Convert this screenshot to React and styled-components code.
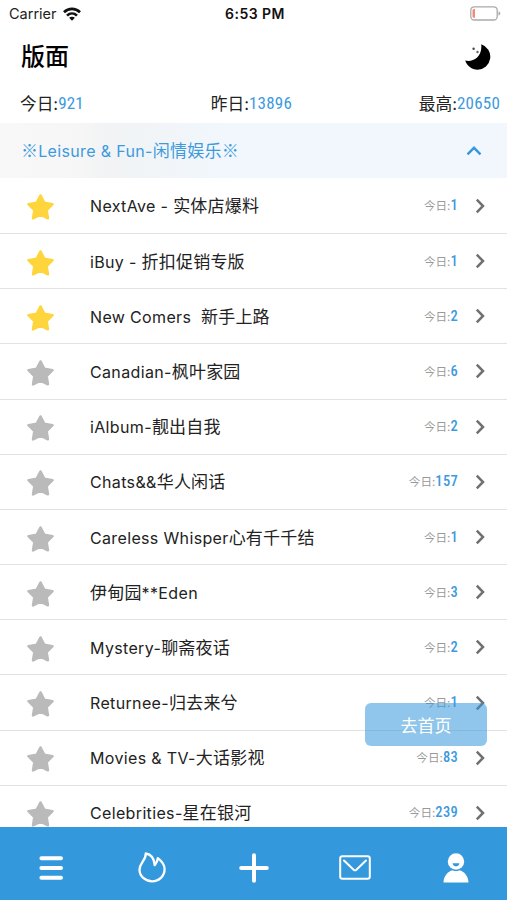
import React, { useState } from 'react';
import styled, { createGlobalStyle } from 'styled-components';

const GlobalStyle = createGlobalStyle`
  body {
    margin: 0;
    background: #fff;
    font-family: Inter, 'Noto Sans CJK SC', sans-serif;
    color: #222;
  }
  * {
    box-sizing: border-box;
  }
`;

const Screen = styled.div`
  position: relative;
  display: flex;
  flex-direction: column;
  width: 507px;
  height: 900px;
  overflow: hidden;
`;

const StatusBar = styled.div`
  display: grid;
  grid-template-columns: 1fr auto 1fr;
  align-items: center;
  height: 27px;
  padding: 0 6px 0 9px;
  font-size: 14.5px;
  svg {
    display: block;
  }
`;

const Carrier = styled.div`
  display: flex;
  align-items: center;
  gap: 6px;
  letter-spacing: 0;
`;

const Clock = styled.div`
  color: #111;
  font-size: 14px;
  font-weight: 600;
  letter-spacing: 0.45px;
`;

const Battery = styled.div`
  justify-self: end;
`;

const Header = styled.header`
  display: flex;
  align-items: center;
  justify-content: space-between;
  height: 59px;
  padding: 0 16px 0 21px;
`;

const Title = styled.h1`
  margin: 0;
  color: #000;
  font-size: 24px;
  font-weight: 500;
  line-height: 32px;
`;

const Stats = styled.div`
  display: flex;
  justify-content: space-between;
  height: 37px;
  padding: 6px 7px 0 20px;
`;

const Stat = styled.div`
  display: flex;
  font-size: 16.7px;
  line-height: 25px;
`;

const Count = styled.span`
  color: #3d9add;
  font-family: Roboto, sans-serif;
  font-stretch: 75%;
  font-size: ${(props) => (props.$small ? 14.5 : 17)}px;
  font-weight: ${(props) => (props.$small ? 500 : 400)};
  letter-spacing: ${(props) => (props.$small ? 0.3 : 0.2)}px;
  line-height: ${(props) => (props.$small ? 18 : 22)}px;
`;

const SectionHeader = styled.div`
  display: flex;
  flex: none;
  align-items: center;
  justify-content: space-between;
  height: 55px;
  padding: 0 25px 0 21px;
  background: linear-gradient(90deg, #f8f8f8 0, #f6f6f6 80px, #f1f3f4 105px, #f1f7fd 230px);
  color: #3d9add;
`;

const BoardList = styled.div`
  flex: 1;
  min-height: 0;
  padding-top: 0.8px;
  overflow: hidden;
`;

const BoardRow = styled.div`
  display: flex;
  align-items: center;
  height: 55.2px;
  padding: 0 22px 0 26px;
  border-bottom: 1.5px solid #e2e2e2;
`;

const StarIcon = styled.svg`
  flex: none;
  margin-top: 3px;
  color: ${(props) => (props.$active ? '#fed53c' : '#bababa')};
`;

const Label = styled.span`
  font-size: 16px;
  letter-spacing: 0.35px;
  line-height: 24px;
  white-space: pre;
`;

const Hanzi = styled.span`
  font-family: 'Noto Sans CJK SC', sans-serif;
  font-size: 17px;
  letter-spacing: 0.2px;
`;

const BoardName = styled.div`
  flex: 1;
  padding-left: 35px;
`;

const Today = styled.div`
  display: flex;
  align-items: center;
  margin: 1px 17px 0 0;
  color: #999;
  font-size: 11.6px;
  line-height: 18px;
`;

const HomeButton = styled.button`
  position: absolute;
  right: 20px;
  bottom: 154px;
  width: 122px;
  height: 43px;
  border: 0;
  border-radius: 6px;
  background: rgba(52, 152, 219, 0.55);
  color: #fff;
  font-family: inherit;
  font-size: 17px;
`;

const TabBar = styled.nav`
  display: flex;
  flex: none;
  height: 73px;
  background: #3498dd;
`;

const Tab = styled.div`
  display: flex;
  flex: 1;
  align-items: center;
  justify-content: center;
  padding-top: 8px;
  color: #fff;
`;

const boards = [
  { name: 'NextAve - 实体店爆料', today: 1, starred: true },
  { name: 'iBuy - 折扣促销专版', today: 1, starred: true },
  { name: 'New Comers  新手上路', today: 2, starred: true },
  { name: 'Canadian-枫叶家园', today: 6 },
  { name: 'iAlbum-靓出自我', today: 2 },
  { name: 'Chats&&华人闲话', today: 157 },
  { name: 'Careless Whisper心有千千结', today: 1 },
  { name: '伊甸园**Eden', today: 3 },
  { name: 'Mystery-聊斋夜话', today: 2 },
  { name: 'Returnee-归去来兮', today: 1 },
  { name: 'Movies & TV-大话影视', today: 83 },
  { name: 'Celebrities-星在银河', today: 239 },
];

const stats = [
  { label: '今日:', value: 921 },
  { label: '昨日:', value: 13896 },
  { label: '最高:', value: 20650 },
];

// Chinese runs are set a little larger than the latin ones
const MixedText = ({ text }) => (
  <Label>
    {text
      .split(/([※\u4e00-\u9fff]+)/)
      .map((part, index) => (index % 2 ? <Hanzi key={index}>{part}</Hanzi> : part))}
  </Label>
);

const WifiIcon = () => (
  <svg width="18" height="14" viewBox="0 0 18 14" fill="none" stroke="#111" strokeWidth="2.7">
    <path d="M1 5.2C5.6.7 12.4.7 17 5.2" />
    <path d="M4 8.6c2.9-2.8 7.1-2.8 10 0" />
    <path d="M9 13.7 6.1 10.8c1.7-1.5 4.1-1.5 5.8 0Z" fill="#111" stroke="none" />
  </svg>
);

const BatteryIcon = () => (
  <svg width="31" height="15" viewBox="0 0 31 15">
    <rect x=".8" y=".8" width="26.4" height="13.2" rx="3.5" fill="none" stroke="#aaa" strokeWidth="1.3" />
    <path d="M5 3v8.800H4A1.5 1.5 0 0 1 2.500 10.300V4.500A1.5 1.5 0 0 1 4 3Z" fill="#f5887c" />
    <path d="M28.500 5.200c2.400.8 2.400 3.600 0 4.400Z" fill="#aaa" />
  </svg>
);

const MoonIcon = () => (
  <svg width="26" height="26" viewBox="0 0 26 26">
    <path d="M16.200.3A13 13 0 0 1 12.600 25.700C6.800 25.700 2 22 .2 16.600 7 18.800 17.800 13.500 16.200.3Z" />
    <circle cx="8.600" cy="4.700" r="1.200" fill="#444" />
    <circle cx="12.500" cy="8" r="1.200" fill="#666" />
  </svg>
);

const Star = ({ active }) => (
  <StarIcon $active={active} width="29" height="28" viewBox="0 0 29 28">
    <path
      d="M14.500 2.500 18.300 9.900 26.500 11.200 20.600 17.100 21.900 25.300 14.500 21.600 7.100 25.300 8.400 17.100 2.500 11.200 10.700 9.900Z"
      fill="currentColor"
      stroke="currentColor"
      strokeWidth="2.600"
      strokeLinejoin="round"
    />
  </StarIcon>
);

const Chevron = () => (
  <svg width="10" height="16" viewBox="0 0 10 16" fill="none" stroke="#707070" strokeWidth="2.500">
    <path d="m1.800 1.700 6.200 6.300-6.200 6.300" />
  </svg>
);

const MenuIcon = () => (
  <svg width="24" height="26" viewBox="0 0 24 26" stroke="#fff" strokeWidth="4" strokeLinecap="round">
    <path d="M2.400 3.300h19.600M2.400 13h19.600M2.400 22.700h19.600" />
  </svg>
);

const FlameIcon = () => (
  <svg width="28" height="31" viewBox="0 0 28 31" fill="none" stroke="#fff" strokeWidth="2.300" strokeLinejoin="round">
    <path d="M7.800 1.500C12.500 2.100 16 5.500 16.700 13.200 18.500 11.200 19.600 9 19.800 6.200 24.200 9.500 26.600 13 26.600 17.300 26.600 24.200 20.900 29.300 14.100 29.300S1.500 24.100 1.500 17.700C1.500 10.700 7.800 9 7.800 1.500Z" />
  </svg>
);

const PlusIcon = () => (
  <svg width="30" height="30" viewBox="0 0 30 30" stroke="#fff" strokeWidth="4" strokeLinecap="round">
    <path d="M15 2.200v25.600M2.200 15h25.600" />
  </svg>
);

const MailIcon = () => (
  <svg width="32" height="25" viewBox="0 0 32 25" fill="none" stroke="#fff" strokeWidth="2">
    <rect x="1.200" y="1.200" width="29.600" height="22.600" rx="2.200" />
    <path d="m5 5.500 9.600 9.200q1.400 1.200 2.800 0L27 5.500" strokeLinecap="round" />
  </svg>
);

const UserIcon = () => (
  <svg width="26" height="30" viewBox="0 0 26 30">
    <circle cx="13" cy="8.500" r="8.200" fill="#fff" />
    <path d="M.5 29.500C.8 22.500 5 18.500 9.500 17.200q3.500 1.800 7 0C21 18.500 25.200 22.500 25.500 29.500Z" fill="#fff" />
    <path d="M9.500 10.200h7c-.4 4.100-6.600 4.100-7 0Z" fill="#3498dd" />
  </svg>
);

const tabs = [MenuIcon, FlameIcon, PlusIcon, MailIcon, UserIcon];

export default function App() {
  const [open, setOpen] = useState(true);

  return (
    <>
      <GlobalStyle />
      <Screen>
        <StatusBar>
          <Carrier>
            <span>Carrier</span>
            <WifiIcon />
          </Carrier>
          <Clock>6:53 PM</Clock>
          <Battery>
            <BatteryIcon />
          </Battery>
        </StatusBar>
        <Header>
          <Title>版面</Title>
          <MoonIcon />
        </Header>
        <Stats>
          {stats.map((stat) => (
            <Stat key={stat.label}>
              {stat.label}
              <Count>{stat.value}</Count>
            </Stat>
          ))}
        </Stats>
        <SectionHeader onClick={() => setOpen(!open)}>
          <MixedText text="※Leisure & Fun-闲情娱乐※" />
          <svg width="16" height="10" viewBox="0 0 16 10" fill="none" stroke="#3498dd" strokeWidth="2.400">
            <path d="m1.500 8.300 6.500-6.500 6.500 6.500" />
          </svg>
        </SectionHeader>
        <BoardList>
          {open &&
            boards.map((board) => (
              <BoardRow key={board.name}>
                <Star active={board.starred} />
                <BoardName>
                  <MixedText text={board.name} />
                </BoardName>
                <Today>
                  今日:
                  <Count $small>{board.today}</Count>
                </Today>
                <Chevron />
              </BoardRow>
            ))}
        </BoardList>
        <TabBar>
          {tabs.map((Icon, index) => (
            <Tab key={index}>
              <Icon />
            </Tab>
          ))}
        </TabBar>
        <HomeButton>去首页</HomeButton>
      </Screen>
    </>
  );
}
